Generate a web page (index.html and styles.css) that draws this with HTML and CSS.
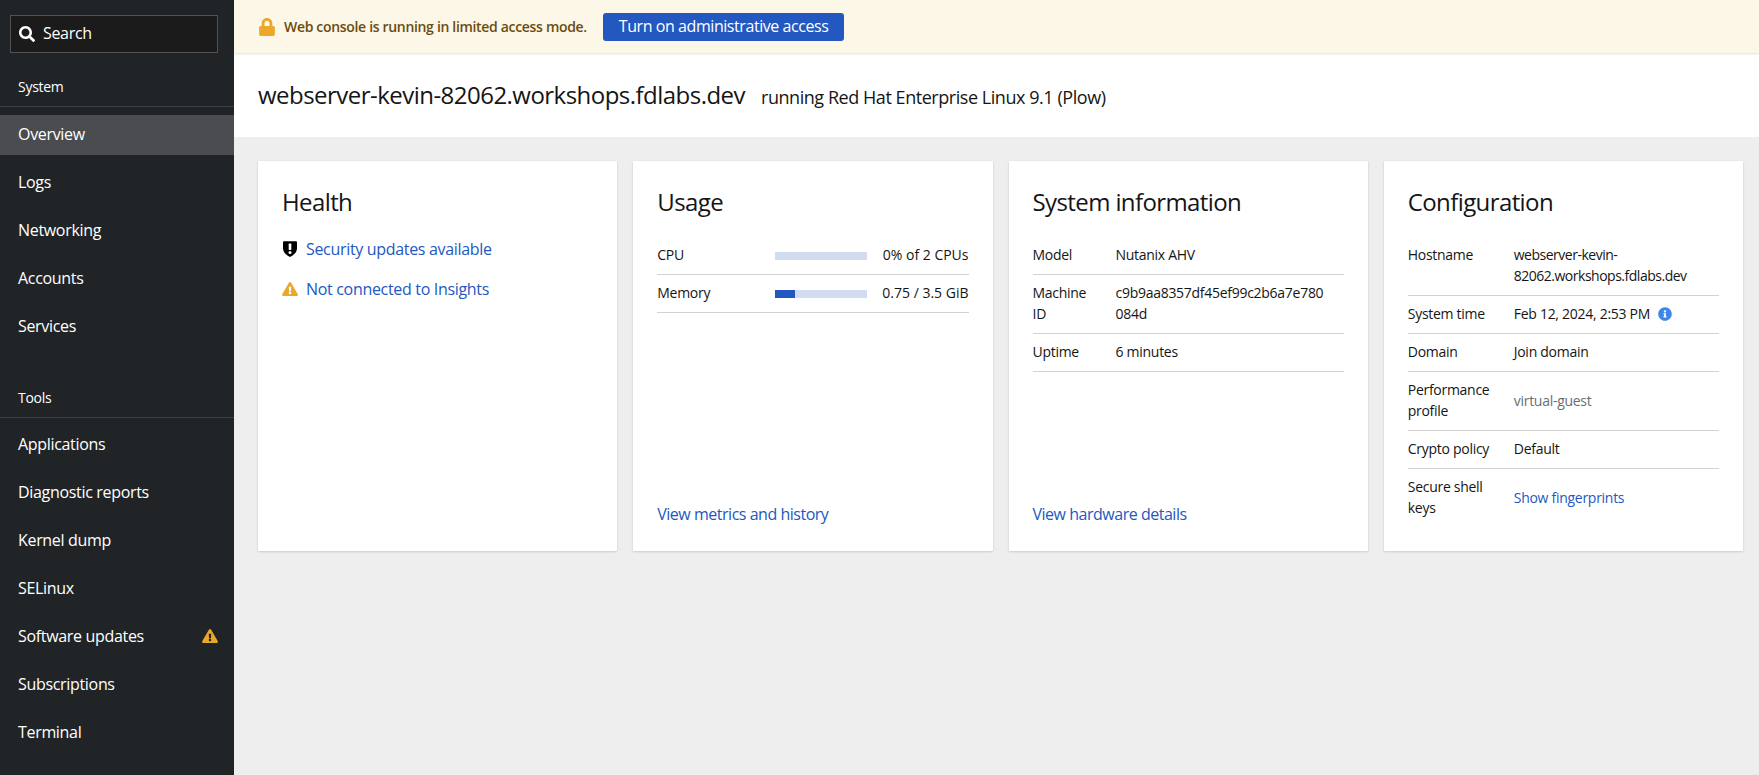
FILE: index.html
```html
<!doctype html>
<html lang="en">
<head>
	<meta charset="UTF-8">
	<title>Overview - webserver-kevin-82062.workshops.fdlabs.dev</title>
	<link rel="stylesheet" href="styles.css">
</head>
<body>
	<div class="shell">
		<nav class="sidebar">
			<div class="search">
				<svg class="search-icon" viewBox="0 0 512 512"><path d="M505 442.7L405.3 343c-4.5-4.5-10.6-7-17-7H372c27.6-35.3 44-79.7 44-128C416 93.1 322.9 0 208 0S0 93.1 0 208s93.1 208 208 208c48.3 0 92.7-16.4 128-44v16.3c0 6.4 2.5 12.5 7 17l99.7 99.7c9.4 9.4 24.6 9.4 33.9 0l28.3-28.3c9.4-9.4 9.4-24.6.1-34zM208 336c-70.7 0-128-57.2-128-128 0-70.7 57.2-128 128-128 70.7 0 128 57.2 128 128 0 70.7-57.2 128-128 128z"/></svg>
				<span>Search</span>
			</div>

			<div class="nav-title nav-title-system">System</div>
			<ul class="nav-list">
				<li class="nav-item active">Overview</li>
				<li class="nav-item">Logs</li>
				<li class="nav-item">Networking</li>
				<li class="nav-item">Accounts</li>
				<li class="nav-item">Services</li>
			</ul>

			<div class="nav-title nav-title-tools">Tools</div>
			<ul class="nav-list nav-list-tools">
				<li class="nav-item">Applications</li>
				<li class="nav-item">Diagnostic reports</li>
				<li class="nav-item">Kernel dump</li>
				<li class="nav-item">SELinux</li>
				<li class="nav-item">Software updates
					<svg class="warn-icon" viewBox="0 0 576 512"><path d="M569.517 440.013C587.975 472.007 564.806 512 527.94 512H48.054c-36.937 0-59.999-40.055-41.577-71.987L246.423 24.035c18.467-32.009 64.72-31.951 83.154 0l239.94 416.178zM288 354c-25.405 0-46 20.595-46 46s20.595 46 46 46 46-20.595 46-46-20.595-46-46-46zm-43.673-165.346l7.418 136c.347 6.364 5.609 11.346 11.982 11.346h48.546c6.373 0 11.635-4.982 11.982-11.346l7.418-136c.375-6.874-5.098-12.654-11.982-12.654h-63.383c-6.884 0-12.356 5.78-11.981 12.654z"/></svg>
				</li>
				<li class="nav-item">Subscriptions</li>
				<li class="nav-item">Terminal</li>
			</ul>
		</nav>

		<main class="main">
			<!-- limited access -->
			<div class="banner">
				<svg class="lock-icon" viewBox="0 0 448 512"><path d="M400 224h-24v-72C376 68.2 307.8 0 224 0S72 68.2 72 152v72H48c-26.5 0-48 21.5-48 48v192c0 26.5 21.5 48 48 48h352c26.5 0 48-21.5 48-48V272c0-26.5-21.5-48-48-48zm-104 0H152v-72c0-39.7 32.3-72 72-72s72 32.3 72 72v72z"/></svg>
				<span class="banner-text">Web console is running in limited access mode.</span>
				<button class="btn-primary">Turn on administrative access</button>
			</div>

			<header class="host-header">
				<h1 class="hostname">webserver-kevin-82062.workshops.fdlabs.dev</h1>
				<span class="os-name">running Red Hat Enterprise Linux 9.1 (Plow)</span>
			</header>

			<div class="cards">
				<!-- health -->
				<section class="card">
					<h2 class="card-title">Health</h2>
					<ul class="health-list">
						<li class="health-item">
							<svg class="health-icon" viewBox="0 0 16 16"><path class="shield" d="M1 1.2Q1 0.2 2 0.2H14Q15 0.2 15 1.2V7.5C15 11.6 11 14.6 8 16 5 14.6 1 11.6 1 7.5Z"/><rect class="mark" x="6.7" y="2.6" width="2.6" height="6.4" rx="0.6"/><circle class="mark" cx="8" cy="11.4" r="1.5"/></svg>
							<a class="link" href="#">Security updates available</a>
						</li>
						<li class="health-item">
							<svg class="health-icon warn" viewBox="0 0 576 512"><path d="M569.517 440.013C587.975 472.007 564.806 512 527.94 512H48.054c-36.937 0-59.999-40.055-41.577-71.987L246.423 24.035c18.467-32.009 64.72-31.951 83.154 0l239.94 416.178zM288 354c-25.405 0-46 20.595-46 46s20.595 46 46 46 46-20.595 46-46-20.595-46-46-46zm-43.673-165.346l7.418 136c.347 6.364 5.609 11.346 11.982 11.346h48.546c6.373 0 11.635-4.982 11.982-11.346l7.418-136c.375-6.874-5.098-12.654-11.982-12.654h-63.383c-6.884 0-12.356 5.78-11.981 12.654z"/></svg>
							<a class="link" href="#">Not connected to Insights</a>
						</li>
					</ul>
				</section>

				<!-- usage -->
				<section class="card">
					<h2 class="card-title">Usage</h2>
					<div class="usage-row">
						<span>CPU</span>
						<div class="bar"><div class="bar-fill" style="width: 0%"></div></div>
						<span class="usage-value">0% of 2 CPUs</span>
					</div>
					<div class="usage-row">
						<span>Memory</span>
						<div class="bar"><div class="bar-fill" style="width: 21%"></div></div>
						<span class="usage-value">0.75 / 3.5 GiB</span>
					</div>
					<a class="link card-footer" href="#">View metrics and history</a>
				</section>

				<!-- system information -->
				<section class="card">
					<h2 class="card-title">System information</h2>
					<div class="info-row info-row-sys"><span>Model</span><span>Nutanix AHV</span></div>
					<div class="info-row info-row-sys"><span>Machine ID</span><span>c9b9aa8357df45ef99c2b6a7e780<br>084d</span></div>
					<div class="info-row info-row-sys"><span>Uptime</span><span>6 minutes</span></div>
					<a class="link card-footer" href="#">View hardware details</a>
				</section>

				<!-- configuration -->
				<section class="card">
					<h2 class="card-title">Configuration</h2>
					<div class="info-row"><span>Hostname</span><span class="tight">webserver-kevin-82062.workshops.fdlabs.dev</span></div>
					<div class="info-row"><span>System time</span>
						<span class="time">Feb 12, 2024, 2:53 PM
							<svg class="info-icon" viewBox="0 0 512 512"><path d="M256 8C119.043 8 8 119.083 8 256c0 136.997 111.043 248 248 248s248-111.003 248-248C504 119.083 392.957 8 256 8zm0 110c23.196 0 42 18.804 42 42s-18.804 42-42 42-42-18.804-42-42 18.804-42 42-42zm56 254c0 6.627-5.373 12-12 12h-88c-6.627 0-12-5.373-12-12v-24c0-6.627 5.373-12 12-12h12v-64h-12c-6.627 0-12-5.373-12-12v-24c0-6.627 5.373-12 12-12h64c6.627 0 12 5.373 12 12v100h12c6.627 0 12 5.373 12 12v24z"/></svg>
						</span>
					</div>
					<div class="info-row"><span>Domain</span><span>Join domain</span></div>
					<div class="info-row"><span>Performance profile</span><span class="muted">virtual-guest</span></div>
					<div class="info-row"><span>Crypto policy</span><span>Default</span></div>
					<div class="info-row info-row-last"><span>Secure shell keys</span><a class="link link-small" href="#">Show fingerprints</a></div>
				</section>
			</div>
		</main>
	</div>
</body>
</html>
```

FILE: styles.css
```css
* {margin: 0; padding: 0; box-sizing: border-box; letter-spacing: -0.02em;}
html, body {height: 100%;}
body {font: normal 14px/21px "Open Sans", sans-serif; color: #151515; background-color: #eee; overflow: hidden;}
ul {list-style: none;}
a {text-decoration: none;}

.shell {display: flex; height: 775px;}

/* sidebar */
.sidebar {width: 234px; flex: none; background-color: #212427; color: #fff; padding-top: 15px;}
.search {display: flex; align-items: center; gap: 8px; height: 38px; margin: 0 16px 0 10px; padding: 0 0 1px 8px; background-color: #1b1b1b; border: 1px solid #4f5255; font-size: 16px;}
.search-icon {width: 16px; height: 16px; fill: #fff;}
.nav-title {height: 45px; font-size: 14px; line-height: 21px; padding: 14px 18px 0; border-bottom: 1px solid #3c3f42;}
.nav-title-system {margin-top: 9px;}
.nav-title-tools {margin-top: 26px;}
.nav-list {padding-top: 8px;}
.nav-list-tools {padding-top: 7px;}
.nav-item {display: flex; align-items: center; justify-content: space-between; height: 40px; margin-bottom: 8px; padding: 0 16px 2px 18px; font-size: 16px;}
.nav-item.active {background-color: #4a4c4f;}
.warn-icon {width: 16px; height: 14px; fill: #e9a72c;}

/* main */
.main {flex: 1; min-width: 0;}
.banner {display: flex; align-items: center; height: 53px; padding-left: 25px; background-color: #fdf7e7; box-shadow: 0 1px 2px rgba(3, 3, 3, .12); position: relative;}
.lock-icon {width: 16px; height: 18px; fill: #eba92b; margin-right: 9px;}
.banner-text {font-size: 14px; font-weight: 600; color: #6a4c10; letter-spacing: -0.023em;}
.btn-primary {height: 28px; margin-left: 16px; padding: 0 16px; background-color: #2358c0; border: 0; border-radius: 3px; color: #fff; font: 16px/21px "Open Sans", sans-serif; letter-spacing: -0.027em;}

.host-header {display: flex; align-items: baseline; gap: 16px; height: 84px; padding: 24px 24px 0; background-color: #fff;}
.hostname {font-size: 24px; line-height: 36px; font-weight: 400; letter-spacing: -0.022em;}
.os-name {font-size: 18px; letter-spacing: -0.025em;}

.cards {display: grid; grid-template-columns: repeat(4, 1fr); gap: 16px; height: 414px; padding: 24px 16px 0 24px;}
.card {display: flex; flex-direction: column; padding: 23px 24px 0; background-color: #fff; box-shadow: 0 1px 2px rgba(3, 3, 3, .12), 0 0 2px rgba(3, 3, 3, .06);}
.card-title {font-size: 24px; line-height: 36px; font-weight: 400; margin-bottom: 17px; letter-spacing: -0.025em;}
.card-footer {margin-top: auto; margin-bottom: 26px; font-size: 16px; letter-spacing: -0.03em;}

.link {color: #2358c0;}
.link-small {font-size: 14px; align-self: center;}

.health-list {display: flex; flex-direction: column; gap: 16px;}
.health-item {display: flex; align-items: center; gap: 8px; font-size: 16px; line-height: 24px;}
.health-icon {width: 16px; height: 16px; flex: none;}
.health-icon.warn {height: 14px; fill: #e9a72c;}
.shield {fill: #000;}
.mark {fill: #fff;}

.usage-row {display: grid; grid-template-columns: 118px 92px 1fr; align-items: center; min-height: 38px; padding: 7px 0 9px; border-bottom: 1px solid #d2d2d2;}
.usage-value {text-align: right; letter-spacing: 0;}
.bar {height: 8px; margin-top: 2px; background-color: #d2dcf1;}
.bar-fill {height: 100%; background-color: #2358c0;}

.info-row {display: grid; grid-template-columns: 106px 1fr; align-items: center; padding: 7px 0 9px; border-bottom: 1px solid #d2d2d2;}
.info-row-sys {grid-template-columns: 83px 1fr;}
.info-row-last {border-bottom: 0;}
.info-row > span:first-child {align-self: start; padding-right: 8px;}
.info-row-sys > span:first-child {padding-right: 20px;}
.tight {letter-spacing: -0.035em;}
.muted {color: #6a6e73;}
.time {display: flex; align-items: center; gap: 8px;}
.info-icon {width: 14px; height: 14px; fill: #3f86ea;}
```
